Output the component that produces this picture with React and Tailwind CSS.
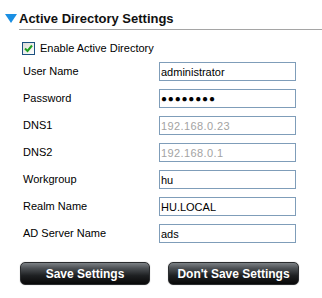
import React from 'react';

const fields = [
  { label: 'User Name', value: 'administrator' },
  { label: 'Password', value: '●●●●●●●●', password: true },
  { label: 'DNS1', value: '192.168.0.23', disabled: true },
  { label: 'DNS2', value: '192.168.0.1', disabled: true },
  { label: 'Workgroup', value: 'hu' },
  { label: 'Realm Name', value: 'HU.LOCAL' },
  { label: 'AD Server Name', value: 'ads' },
];

export default function App() {
  return (
    <div className="w-[322px] h-[298px] bg-white font-['Liberation_Sans',Arial,sans-serif] text-black overflow-hidden">
      {/* Section header */}
      <div className="flex pt-[11px] pl-[5px]">
        <svg width="12" height="9" viewBox="0 0 12 9" className="mt-[3px] shrink-0">
          <polygon points="0,0 12,0 6,9" fill="#1a8fe3" />
        </svg>
        <div className="flex-1 ml-[2px] pb-[3px] border-b border-[#a5a5a5]">
          <div className="text-[13px] leading-[15px] font-bold text-[#111]">Active Directory Settings</div>
        </div>
      </div>

      {/* Enable checkbox */}
      <div className="flex items-center mt-[12px] pl-[22px] gap-[5px]">
        <div className="w-[13px] h-[13px] border border-[#1c5180] bg-[linear-gradient(135deg,#dcdcd7,#ffffff)] flex items-center justify-center">
          <svg width="9" height="9" viewBox="0 0 9 9">
            <path d="M1 4.5 L3.5 7 L8 1.5" stroke="#21a121" strokeWidth="2" fill="none" />
          </svg>
        </div>
        <span className="text-[11px] leading-[13px]">Enable Active Directory</span>
      </div>

      {/* Form fields */}
      <div className="flex flex-col gap-[8px] mt-[7px] pl-[23px]">
        {fields.map((f) => (
          <div key={f.label} className="flex items-center h-[19px]">
            <span className="w-[136px] text-[11px]">{f.label}</span>
            <input
              type="text"
              readOnly
              value={f.value}
              className={`w-[137px] h-[19px] border border-[#7f9db9] bg-white pl-[1px] outline-none ${
                f.password
                  ? 'text-[10px] tracking-[0.8px] text-black'
                  : f.disabled
                  ? 'text-[11px] tracking-[0.4px] text-[#a3a3a3]'
                  : 'text-[11px] text-black'
              }`}
            />
          </div>
        ))}
      </div>

      {/* Buttons */}
      <div className="flex mt-[19px] pl-[20px] gap-[18px]">
        <button className="w-[130px] h-[23px] rounded-[5px] border border-[#2a2c2e] shadow-[0_0_1px_#999] bg-[linear-gradient(#7d8286,#4c5054_25%,#1e2022_60%,#080808)] text-white text-[12px] font-bold">
          Save Settings
        </button>
        <button className="w-[131px] h-[23px] rounded-[5px] border border-[#2a2c2e] shadow-[0_0_1px_#999] bg-[linear-gradient(#7d8286,#4c5054_25%,#1e2022_60%,#080808)] text-white text-[12px] font-bold">
          Don't Save Settings
        </button>
      </div>
    </div>
  );
}
